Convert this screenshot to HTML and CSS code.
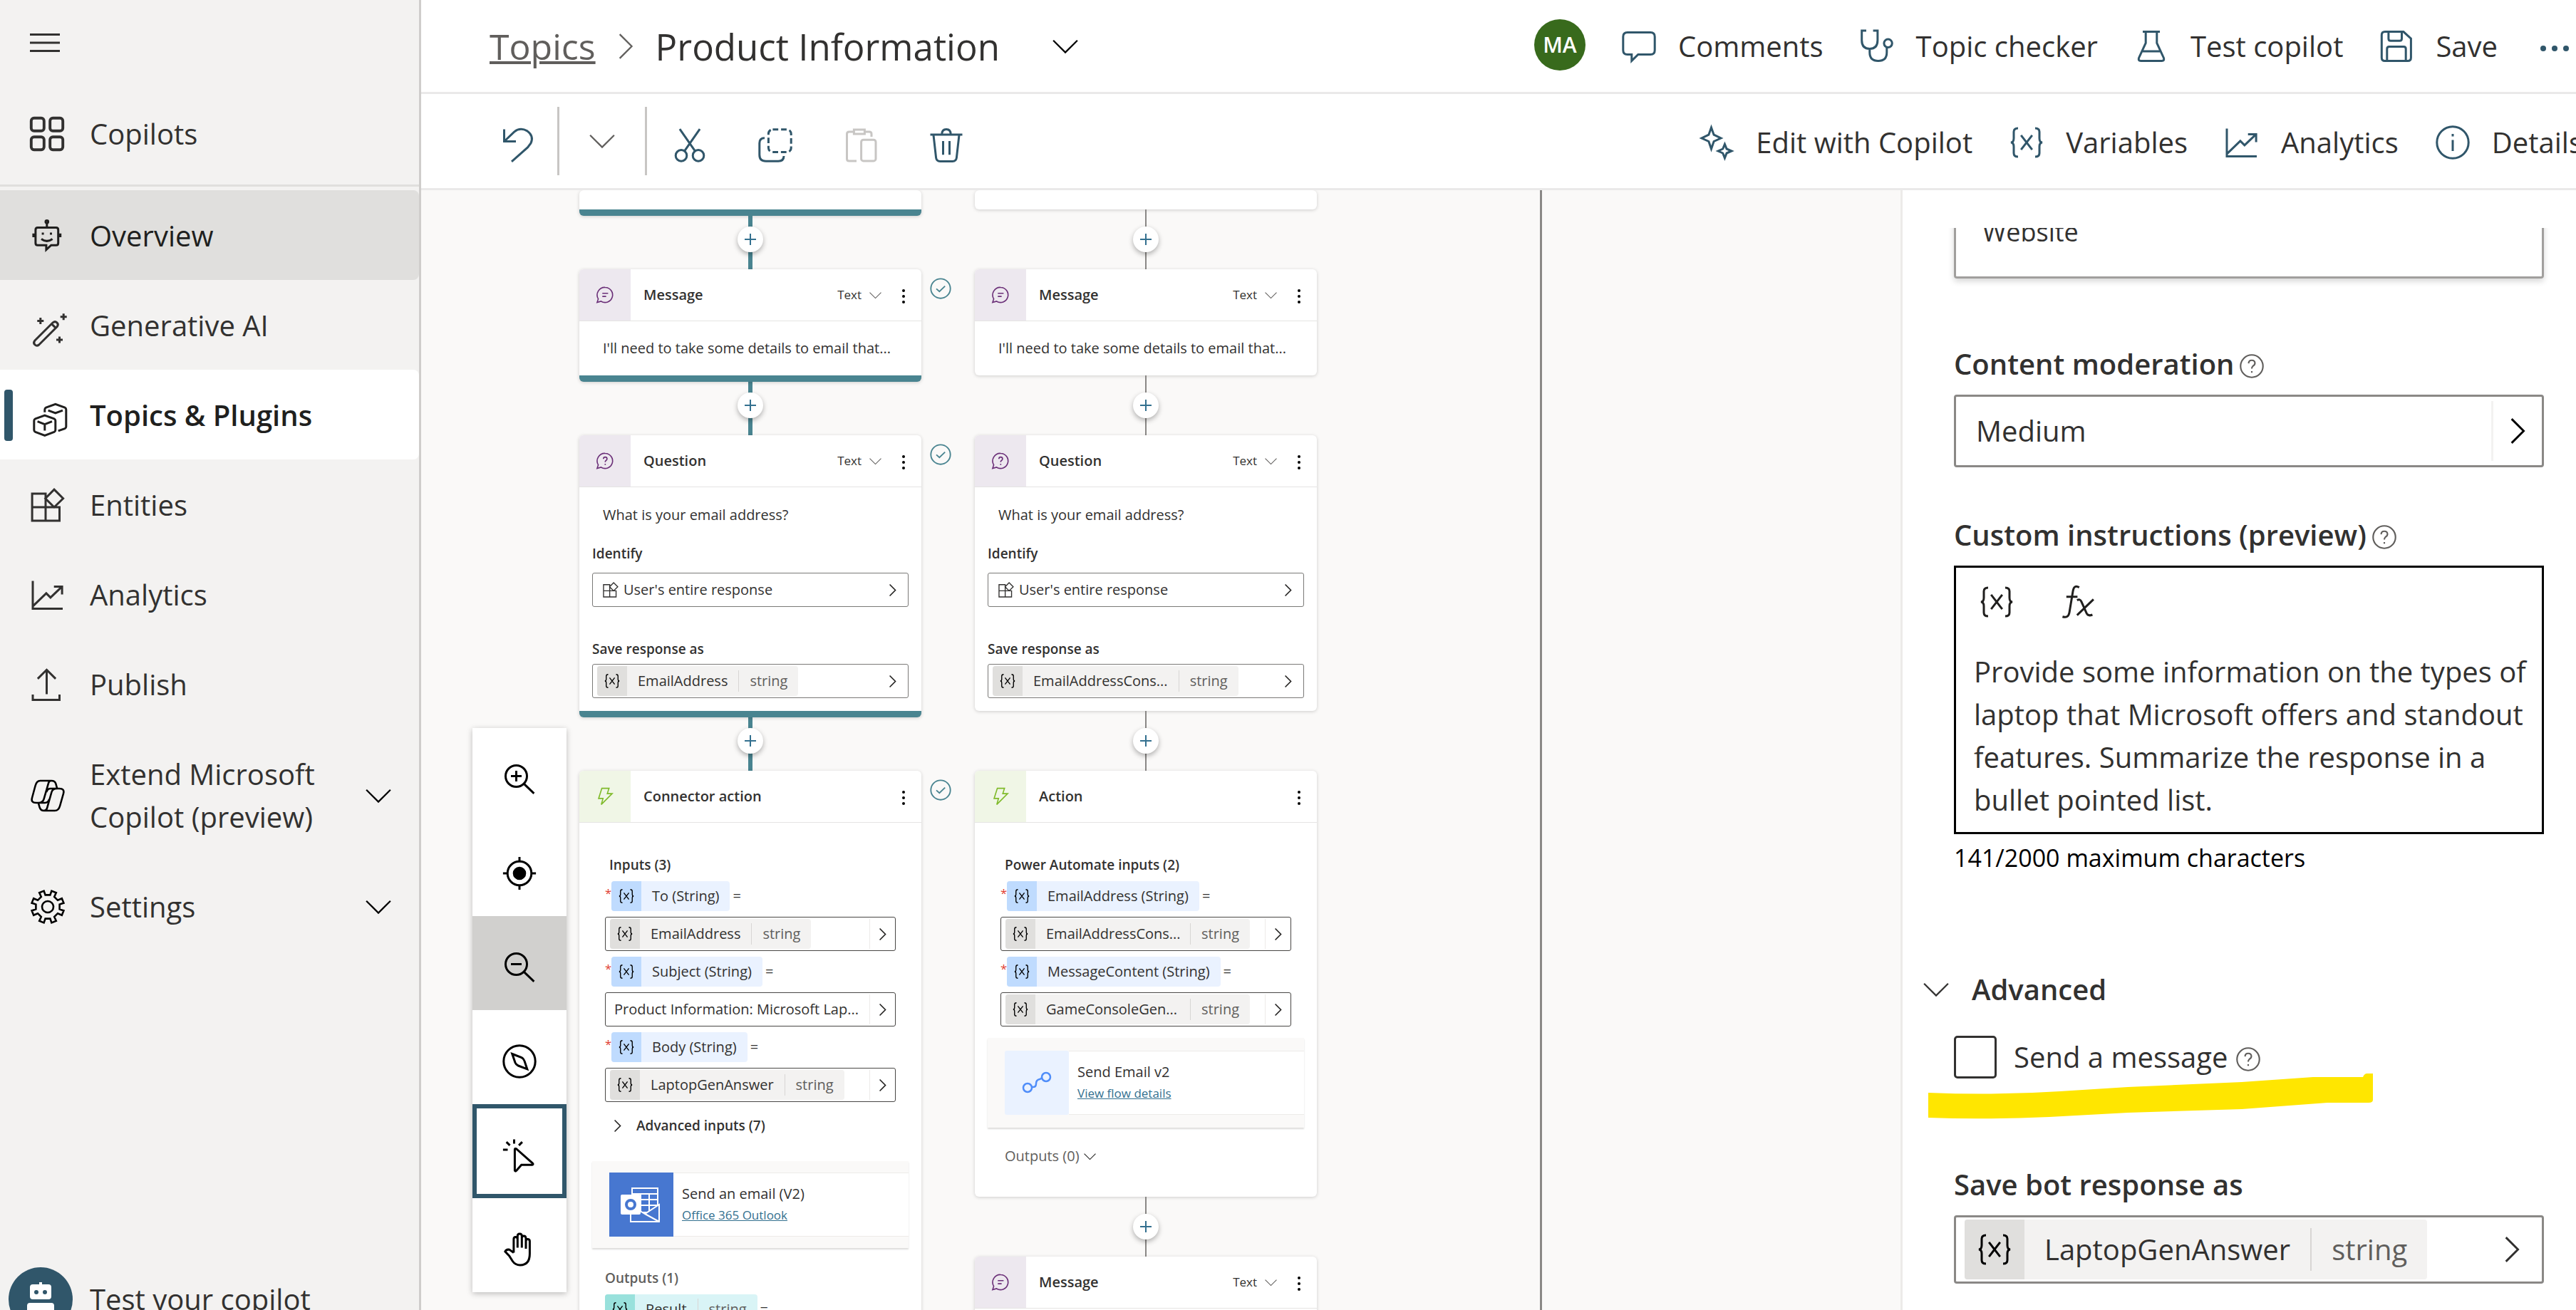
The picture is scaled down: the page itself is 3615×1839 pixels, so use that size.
FILE: index.html
```html
<!DOCTYPE html>
<html lang="en">
<head>
<meta charset="utf-8">
<title>Product Information - Topics</title>
<link rel="stylesheet" href="styles.css">
</head>
<body>
<svg class="defs" aria-hidden="true">
  <symbol id="i-menu" viewBox="0 0 16 16"><path d="M1 4.2h14M1 8h14M1 11.8h14"/></symbol>
  <symbol id="i-apps" viewBox="0 0 16 16"><rect x="0.6" y="0.6" width="6" height="6" rx="1.3"/><rect x="9.4" y="0.6" width="6" height="6" rx="1.3"/><rect x="0.6" y="9.4" width="6" height="6" rx="1.3"/><rect x="9.4" y="9.4" width="6" height="6" rx="1.3"/></symbol>
  <symbol id="i-bot" viewBox="0 0 16 16"><path d="M3.300 4.200h8.600q1 0 1 1v6.200q0 1-1 1H9.600L7.3 14.500v-2.100h-4q-1 0-1-1V5.200q0-1 1-1zM7.600 4.200V1.800M1.300 6.900v1.800M13.900 6.900v1.800M5 9.500q2.600 1.900 5.200 0M5.200 7h1M9 7h1"/><circle cx="7.600" cy="1.400" r=".6"/></symbol>
  <symbol id="i-wand" viewBox="-1 -2 16 16"><path d="M.9 13.100 9.400 4.600q1-.8 1.900 0t.1 1.900L2.900 15q-1 .8-1.900 0t-.1-1.900zM8.800 5.200l2 2M3.600 2.300v3M2.100 3.800h3M14.400.4v3M12.900 1.900h3M12.500 11.200v3M11 12.700h3"/></symbol>
  <symbol id="i-topics" viewBox="-1 -2 16 16"><path d="M1.200 7.600 5.600 6 10 7.600q.6.300.6.900v4.400q0 .6-.6.900L5.600 15.500 1.200 13.800q-.6-.3-.6-.9V8.500q0-.6.6-.9zM2.200 8.900l3.400 1.300L9 8.900M5.600 10.200v3M5.600 4.600V3.300q0-.6.600-.9L10.600.8 15 2.400q.6.300.6.900v8q0 .6-.6.900L11.900 13.300M7.200 3.700l3.400 1.300L14 3.700"/></symbol>
  <symbol id="i-entities" viewBox="0 0 16 16"><path d="M.7 2.700h6.300v12.600H.7zM.7 9h12.800v6.300H7V9zM11 .7l4.200 4.200L11 9 6.900 4.900z"/></symbol>
  <symbol id="i-chart" viewBox="0 0 16 16"><path d="M1 1.500V14.500H15M1 13.400 7.300 7.300l2 2L14.600 4.200M10.900 4.200h3.800v3.600"/></symbol>
  <symbol id="i-publish" viewBox="0 0 16 16"><path d="M7.500 12.500V1M3.300 5.300 7.500 1.100l4.200 4.200M1 12.700v2.500h12.500v-2.500"/></symbol>
  <symbol id="i-copilot" viewBox="0 0 24 24"><path d="M6.700 1.500H14.500q2.600 0 3.200 2.200L18.600 7H20q4 0 3 3.500L20.600 19q-.9 3.500-3.600 3.500H9.300q-2.300 0-3-2.300L5.400 17H4Q0 17 1 13.500L3.300 5Q4.200 1.500 6.700 1.500zM14.500 1.500q-1.600 0-2 1.700L9.300 14.300Q8.500 17 5.400 17M18.600 7H14q-2.200 0-2.900 2.500M9.300 22.500q1.700 0 2.200-1.700L14.700 9.500Q15.400 7 18.600 7M5.400 17H10q2.300 0 3-2.500"/></symbol>
  <symbol id="i-gear" viewBox="0 0 24 24"><circle cx="12" cy="12" r="4"/><path d="M9.300.8 10.300 3.700h3.400L14.700.8l3.200 1.300-1.300 2.900L19 7.400l2.900-1.300 1.300 3.200-2.900 1v3.400l2.900 1-1.300 3.200L19 16.600 16.600 19l1.300 2.900-3.200 1.300-1-2.900h-3.400l-1 2.900-3.200-1.300L7.400 19 5 16.600l-2.900 1.300L.8 14.700l2.900-1v-3.400L.8 9.300 2.100 6.100 5 7.400 7.400 5 6.100 2.100z"/></symbol>
  <symbol id="i-down" viewBox="0 0 16 16"><path d="M.5 4.300 8 11.800l7.500-7.500"/></symbol>
  <symbol id="i-right" viewBox="0 0 16 16"><path d="M4.300.5 11.800 8 4.300 15.500"/></symbol>
  <symbol id="i-undo" viewBox="0 0 16 16"><path d="M1.500.5v5.700H7M1.700 6 6.200 1.700Q9-.6 12.300 1.300q3.200 2.300 1.700 5.700L12.500 9 5 15.600"/></symbol>
  <symbol id="i-cut" viewBox="0 0 16 16"><circle cx="4" cy="12.800" r="2.600"/><circle cx="12" cy="12.800" r="2.600"/><path d="M5.500 10.700 12.700.4M3.300.4 10.500 10.700"/></symbol>
  <symbol id="i-copy" viewBox="0 0 16 16"><rect x="4.800" y=".6" width="10.600" height="10.600" rx="2" stroke-dasharray="2.600 1.300"/><path d="M3 4.600Q.6 4.600.6 7v5.400q0 3 3 3H9.400q2.600 0 2.600-2.400"/></symbol>
  <symbol id="i-paste" viewBox="0 0 16 16"><path d="M6 15.300H2.500Q1.500 15.300 1.500 14.300V2.700Q1.500 1.700 2.500 1.700H4.700M9.800 1.700H12Q13 1.700 13 2.700V4M4.800.7h5v2h-5z"/><rect x="8.200" y="5.400" width="6.800" height="9.900" rx="1"/></symbol>
  <symbol id="i-trash" viewBox="0 0 16 16"><path d="M.5 3h15M5.900 3Q5.900.5 8 .5T10.100 3M2 3.200l1.200 10.600q.2 1.700 1.900 1.700h5.800q1.700 0 1.900-1.700L14 3.200M6.500 6v6.400M9.500 6v6.400"/></symbol>
  <symbol id="i-comment" viewBox="0 0 16 16"><path d="M2.600 1.500H13.400q2 0 2 2v6.300q0 2-2 2H7.600l-3 3v-3H2.600q-2 0-2-2V3.500q0-2 2-2z"/></symbol>
  <symbol id="i-steth" viewBox="0 0 16 16"><path d="M3 .7H.9v4.500q0 4 3.700 4T8.300 5.200V.7H6.200M4.600 9.200v1.600q0 4 4 4t4-4V8.500"/><circle cx="13.200" cy="6.600" r="1.900"/></symbol>
  <symbol id="i-flask" viewBox="0 0 16 16"><path d="M4 1.200h8M5.400 1.200v5.300L2.200 13.400q-.5 1.400.9 1.400h9.800q1.400 0 .9-1.400L10.600 6.500V1.200M4 10.300h8"/></symbol>
  <symbol id="i-save" viewBox="0 0 16 16"><path d="M2.600 1.200h8.700l3.500 3.200v8.900q0 1.500-1.500 1.500H2.600q-1.500 0-1.500-1.500V2.700q0-1.500 1.500-1.500zM4.300 1.200v3.200q0 1 1 1h4.200q1 0 1-1V1.200M3.600 14.800V9.200q0-1 1-1h6.800q1 0 1 1v5.600"/></symbol>
  <symbol id="i-sparkle" viewBox="0 0 16 16"><path d="M5.500 1 6.700 4.400 10 6 6.700 7.500 5.500 11 4.300 7.500 1 6 4.300 4.400zM11.800 8.800l.9 2.200 2.300 1-2.300 1-.9 2.300-.9-2.300-2.200-1 2.200-1z"/></symbol>
  <symbol id="i-var" viewBox="0 0 16 16"><path d="M4 1.300Q2 1.300 2 3v3Q2 8 .6 8 2 8 2 10v3q0 1.700 2 1.700M12 1.300q2 0 2 1.700v3q0 2 1.400 2Q14 8 14 10v3q0 1.700-2 1.700M5.400 4.600l5.200 6.800M10.600 4.600l-5.200 6.800"/></symbol>
  <symbol id="i-info" viewBox="0 0 16 16"><circle cx="8" cy="8" r="7.400"/><path d="M8 6.800V12M8 4v1.200"/></symbol>
  <symbol id="i-help" viewBox="0 0 16 16"><circle cx="8" cy="8" r="7.400"/><path d="M5.900 6.200Q6 4.100 8 4.100t2.100 1.900Q10.100 7.200 8.700 8 8 8.600 8 9.700M8 11.300v1"/></symbol>
  <symbol id="i-fx" viewBox="0 0 16 16"><path d="M8.600 1.200Q6.200-.2 5.700 2.800L4 13q-.5 2.700-3.200 1.900M2.600 5.600h5.200M7.600 7.200q1.400-.8 2 .6l2.500 5.600q.7 1.400 2.700.6M15.300 6.800 7.600 14.200"/></symbol>
  <symbol id="i-msg" viewBox="0 0 16 16"><path d="M8.200 1.500a6.500 6.500 0 1 1-3.600 12L1.200 14.500 2.200 11.500A6.600 6.600 0 0 1 8.200 1.500zM5.700 6.600h5M5.700 9.300H9"/></symbol>
  <symbol id="i-ask" viewBox="0 0 16 16"><path d="M8.200 1.500a6.500 6.500 0 1 1-3.600 12L1.200 14.500 2.200 11.500A6.600 6.600 0 0 1 8.200 1.500zM6.600 6.300Q6.700 4.700 8.200 4.700t1.600 1.500Q9.800 7.200 8.700 7.800 8.200 8.200 8.200 9M8.200 10.500v1"/></symbol>
  <symbol id="i-bolt" viewBox="0 0 16 16"><path d="M5.300 1h6.200L10 5.600h4.200L4.800 15 6.300 9.800H2.500z"/></symbol>
  <symbol id="i-plus" viewBox="0 0 16 16"><path d="M8 0v16M0 8h16"/></symbol>
  <symbol id="i-check" viewBox="0 0 16 16"><circle cx="8" cy="8" r="7.300"/><path d="M4.800 8.200 7.100 10.200l4.200-4"/></symbol>
  <symbol id="i-flow" viewBox="0 0 40 32"><circle cx="7" cy="23" r="6"/><circle cx="33" cy="8" r="6"/><path d="M13 22h2q4 0 4-5t5-6q3-1 3-2.500"/></symbol>
  <symbol id="i-zoomin" viewBox="0 0 16 16"><circle cx="6.500" cy="6.500" r="5"/><path d="M10.200 10.200l4.600 4.400M4 6.500h5M6.500 4v5"/></symbol>
  <symbol id="i-zoomout" viewBox="0 0 16 16"><circle cx="6.500" cy="6.500" r="5"/><path d="M10.200 10.200l4.600 4.400M4 6.500h5"/></symbol>
  <symbol id="i-target" viewBox="0 0 16 16"><circle cx="8" cy="8" r="5.600"/><circle cx="8" cy="8" r="2.600" fill="currentColor"/><path d="M8 .3v2.100M8 13.600v2.100M.3 8h2.100M13.600 8h2.100"/></symbol>
  <symbol id="i-compass" viewBox="0 0 16 16"><circle cx="8" cy="8" r="7.400"/><path d="M4.600 4.500 9 6.200q1 .5 1.300 1.500l1.300 3.900L7.400 10q-1-.4-1.400-1.400z"/></symbol>
  <symbol id="i-pointer" viewBox="0 0 16 16"><path d="M5.800 5.200v9.800q.2.700.8.100l2.300-2.700h5q.8-.2.200-.8L6.500 4.900q-.6-.3-.7.300zM5.500.5v2M1.900 1.700l1.600 1.600M9.300 1.700 7.700 3.300M.3 5.300h2.200"/></symbol>
  <symbol id="i-hand" viewBox="0 0 16 16"><path d="M5.300 9.500V3.200Q5.300 2.200 6.200 2.200t.9 1V1.700Q7.100.7 8.100.7t1 1v1q0-1 .9-1t1 1v1.500q0-1 .8-1 1 0 1 1V10q0 5.300-4.500 5.300-2.300 0-3.500-1.800L3.200 11 1.300 9q.6-1.200 2-.9l2 1.400M7.100 3.200v4M9.100 2.600v4.600M11 4v3.700"/></symbol>
</svg>

<div class="app">
  <nav class="sidebar">
    <button class="menu" aria-label="Menu"><svg class="ic l"><use href="#i-menu"/></svg></button>
    <a class="nav top" href="#"><svg class="ic l bold"><use href="#i-apps"/></svg><span>Copilots</span></a>
    <a class="nav hover" href="#"><svg class="ic l"><use href="#i-bot"/></svg><span>Overview</span></a>
    <a class="nav" href="#"><svg class="ic l"><use href="#i-wand"/></svg><span>Generative AI</span></a>
    <a class="nav current" href="#"><svg class="ic l"><use href="#i-topics"/></svg><span>Topics &amp; Plugins</span></a>
    <a class="nav" href="#"><svg class="ic l"><use href="#i-entities"/></svg><span>Entities</span></a>
    <a class="nav" href="#"><svg class="ic l"><use href="#i-chart"/></svg><span>Analytics</span></a>
    <a class="nav" href="#"><svg class="ic l"><use href="#i-publish"/></svg><span>Publish</span></a>
    <button class="nav"><svg class="ic l fine"><use href="#i-copilot"/></svg><span>Extend Microsoft<br>Copilot (preview)</span><svg class="ic chev"><use href="#i-down"/></svg></button>
    <button class="nav"><svg class="ic l fine"><use href="#i-gear"/></svg><span>Settings</span><svg class="ic chev"><use href="#i-down"/></svg></button>
    <a class="tester" href="#">
      <svg class="bot" viewBox="0 0 90 90"><circle cx="45" cy="45" r="45"/><path class="w" d="M34 24h9v-3h4v3h9q4 0 4 4v13q0 4-4 4H34q-4 0-4-4V28q0-4 4-4zM30 50h30q4 0 4 4v10q0 4-4 4H30q-4 0-4-4V54q0-4 4-4z"/><circle cx="39" cy="35" r="3"/><circle cx="51" cy="35" r="3"/></svg>
      <span>Test your copilot</span>
    </a>
  </nav>

  <div class="main">
    <header class="bar">
      <div class="crumbs">
        <a href="#">Topics</a>
        <svg class="ic m grey"><use href="#i-right"/></svg>
        <h1>Product Information</h1>
        <button aria-label="Topic menu"><svg class="ic m"><use href="#i-down"/></svg></button>
      </div>
      <div class="actions">
        <span class="avatar">MA</span>
        <button class="act"><svg class="ic l"><use href="#i-comment"/></svg>Comments</button>
        <button class="act"><svg class="ic l"><use href="#i-steth"/></svg>Topic checker</button>
        <button class="act"><svg class="ic l"><use href="#i-flask"/></svg>Test copilot</button>
        <button class="act"><svg class="ic l"><use href="#i-save"/></svg>Save</button>
        <button class="act overflow" aria-label="More"><svg class="ic l dots" viewBox="0 0 48 48"><circle cx="7" cy="27" r="4"/><circle cx="23" cy="27" r="4"/><circle cx="39" cy="27" r="4"/></svg></button>
      </div>
    </header>

    <div class="bar tools">
      <div class="edit">
        <button aria-label="Undo"><svg class="ic l"><use href="#i-undo"/></svg></button>
        <button class="split" aria-label="Undo history"><svg class="ic m grey"><use href="#i-down"/></svg></button>
        <button aria-label="Cut"><svg class="ic l"><use href="#i-cut"/></svg></button>
        <button aria-label="Copy"><svg class="ic l"><use href="#i-copy"/></svg></button>
        <button aria-label="Paste" disabled><svg class="ic l"><use href="#i-paste"/></svg></button>
        <button aria-label="Delete"><svg class="ic l"><use href="#i-trash"/></svg></button>
      </div>
      <div class="actions">
        <button class="act"><svg class="ic l"><use href="#i-sparkle"/></svg>Edit with Copilot</button>
        <button class="act"><svg class="ic l"><use href="#i-var"/></svg>Variables</button>
        <button class="act"><svg class="ic l"><use href="#i-chart"/></svg>Analytics</button>
        <button class="act"><svg class="ic l"><use href="#i-info"/></svg>Details</button>
      </div>
    </div>

    <div class="work">
      <main class="canvas">
        <div class="branch done">
          <section class="card stub"></section>
          <div class="link"><button aria-label="Add node"><svg class="ic p"><use href="#i-plus"/></svg></button></div>
          <div class="step">
            <section class="card">
              <header><span class="tile"><svg class="ic s"><use href="#i-msg"/></svg></span><h2>Message</h2><button class="kind">Text<svg class="ic xs"><use href="#i-down"/></svg></button><button class="more" aria-label="More"><i></i><i></i><i></i></button></header>
              <p class="say">I'll need to take some details to email that...</p>
            </section>
            <svg class="ic check"><use href="#i-check"/></svg>
          </div>
          <div class="link"><button aria-label="Add node"><svg class="ic p"><use href="#i-plus"/></svg></button></div>
          <div class="step">
            <section class="card">
              <header><span class="tile"><svg class="ic s"><use href="#i-ask"/></svg></span><h2>Question</h2><button class="kind">Text<svg class="ic xs"><use href="#i-down"/></svg></button><button class="more" aria-label="More"><i></i><i></i><i></i></button></header>
              <div class="ask">
                <p>What is your email address?</p>
                <h3>Identify</h3>
                <button class="field ent"><svg class="ic e"><use href="#i-entities"/></svg>User's entire response<svg class="ic go"><use href="#i-right"/></svg></button>
                <h3 class="save">Save response as</h3>
                <button class="field"><span class="chip"><b><svg class="ic v"><use href="#i-var"/></svg></b><span>EmailAddress</span><em>string</em></span><svg class="ic go"><use href="#i-right"/></svg></button>
              </div>
            </section>
            <svg class="ic check"><use href="#i-check"/></svg>
          </div>
          <div class="link"><button aria-label="Add node"><svg class="ic p"><use href="#i-plus"/></svg></button></div>
          <div class="step">
            <section class="card">
              <header><span class="tile green"><svg class="ic s"><use href="#i-bolt"/></svg></span><h2>Connector action</h2><button class="more" aria-label="More"><i></i><i></i><i></i></button></header>
              <div class="inputs">
                <h3>Inputs (3)</h3>
                <div class="arg"><sup>*</sup><span class="chip blue"><b><svg class="ic v"><use href="#i-var"/></svg></b><span>To (String)</span></span>=</div>
                <button class="field dark"><span class="chip"><b><svg class="ic v"><use href="#i-var"/></svg></b><span>EmailAddress</span><em>string</em></span><span class="end"><svg class="ic go"><use href="#i-right"/></svg></span></button>
                <div class="arg"><sup>*</sup><span class="chip blue"><b><svg class="ic v"><use href="#i-var"/></svg></b><span>Subject (String)</span></span>=</div>
                <button class="field dark"><span class="plain">Product Information: Microsoft Lap...</span><span class="end"><svg class="ic go"><use href="#i-right"/></svg></span></button>
                <div class="arg"><sup>*</sup><span class="chip blue"><b><svg class="ic v"><use href="#i-var"/></svg></b><span>Body (String)</span></span>=</div>
                <button class="field dark"><span class="chip"><b><svg class="ic v"><use href="#i-var"/></svg></b><span>LaptopGenAnswer</span><em>string</em></span><span class="end"><svg class="ic go"><use href="#i-right"/></svg></span></button>
                <button class="adv"><svg class="ic go"><use href="#i-right"/></svg>Advanced inputs (7)</button>
                <div class="flow mail">
                  <span class="logo outlook"><svg viewBox="0 0 90 90"><g fill="none" stroke="#fff" stroke-width="2"><path d="M32 22h36v34H32zM32 30h36M32 38h36M32 46h36M44 30v24M56 30v24"/><path fill="#4777d0" d="M30 46l20 12 20-13v24H30zM50 58l20 11"/></g><rect x="16" y="31" width="28" height="28" rx="2" fill="#fff"/><circle cx="30" cy="45" r="6" fill="none" stroke="#4777d0" stroke-width="4"/></svg></span>
                  <div><span>Send an email (V2)</span><a href="#">Office 365 Outlook</a></div>
                </div>
                <h3 class="out">Outputs (1)</h3>
                <div class="arg res"><span class="chip teal"><b><svg class="ic v"><use href="#i-var"/></svg></b><span>Result</span><em>string</em></span>=</div>
              </div>
            </section>
            <svg class="ic check"><use href="#i-check"/></svg>
          </div>
        </div>

        <div class="branch">
          <section class="card stub"></section>
          <div class="link"><button aria-label="Add node"><svg class="ic p"><use href="#i-plus"/></svg></button></div>
          <section class="card">
            <header><span class="tile"><svg class="ic s"><use href="#i-msg"/></svg></span><h2>Message</h2><button class="kind">Text<svg class="ic xs"><use href="#i-down"/></svg></button><button class="more" aria-label="More"><i></i><i></i><i></i></button></header>
            <p class="say">I'll need to take some details to email that...</p>
          </section>
          <div class="link"><button aria-label="Add node"><svg class="ic p"><use href="#i-plus"/></svg></button></div>
          <section class="card">
            <header><span class="tile"><svg class="ic s"><use href="#i-ask"/></svg></span><h2>Question</h2><button class="kind">Text<svg class="ic xs"><use href="#i-down"/></svg></button><button class="more" aria-label="More"><i></i><i></i><i></i></button></header>
            <div class="ask">
              <p>What is your email address?</p>
              <h3>Identify</h3>
              <button class="field ent"><svg class="ic e"><use href="#i-entities"/></svg>User's entire response<svg class="ic go"><use href="#i-right"/></svg></button>
              <h3 class="save">Save response as</h3>
              <button class="field"><span class="chip"><b><svg class="ic v"><use href="#i-var"/></svg></b><span>EmailAddressCons...</span><em>string</em></span><svg class="ic go"><use href="#i-right"/></svg></button>
            </div>
          </section>
          <div class="link"><button aria-label="Add node"><svg class="ic p"><use href="#i-plus"/></svg></button></div>
          <section class="card">
            <header><span class="tile green"><svg class="ic s"><use href="#i-bolt"/></svg></span><h2>Action</h2><button class="more" aria-label="More"><i></i><i></i><i></i></button></header>
            <div class="inputs">
              <h3>Power Automate inputs (2)</h3>
              <div class="arg"><sup>*</sup><span class="chip blue"><b><svg class="ic v"><use href="#i-var"/></svg></b><span>EmailAddress (String)</span></span>=</div>
              <button class="field dark"><span class="chip fixed"><b><svg class="ic v"><use href="#i-var"/></svg></b><span>EmailAddressCons...</span><em>string</em></span><span class="end"><svg class="ic go"><use href="#i-right"/></svg></span></button>
              <div class="arg"><sup>*</sup><span class="chip blue"><b><svg class="ic v"><use href="#i-var"/></svg></b><span>MessageContent (String)</span></span>=</div>
              <button class="field dark"><span class="chip fixed"><b><svg class="ic v"><use href="#i-var"/></svg></b><span>GameConsoleGen...</span><em>string</em></span><span class="end"><svg class="ic go"><use href="#i-right"/></svg></span></button>
              <div class="flow">
                <span class="logo"><svg class="ic flowic"><use href="#i-flow"/></svg></span>
                <div><span>Send Email v2</span><a href="#">View flow details</a></div>
              </div>
              <button class="outs">Outputs (0)<svg class="ic xs"><use href="#i-down"/></svg></button>
            </div>
          </section>
          <div class="link"><button aria-label="Add node"><svg class="ic p"><use href="#i-plus"/></svg></button></div>
          <section class="card">
            <header><span class="tile"><svg class="ic s"><use href="#i-msg"/></svg></span><h2>Message</h2><button class="kind">Text<svg class="ic xs"><use href="#i-down"/></svg></button><button class="more" aria-label="More"><i></i><i></i><i></i></button></header>
            <p class="say"></p>
          </section>
        </div>
        <div class="wire"></div>

        <div class="zoombar">
          <button aria-label="Zoom in"><svg class="ic l"><use href="#i-zoomin"/></svg></button>
          <button aria-label="Reset view"><svg class="ic l"><use href="#i-target"/></svg></button>
          <button class="pressed" aria-label="Zoom out"><svg class="ic l"><use href="#i-zoomout"/></svg></button>
          <button aria-label="Minimap"><svg class="ic l"><use href="#i-compass"/></svg></button>
          <button class="on" aria-label="Select"><svg class="ic l"><use href="#i-pointer"/></svg></button>
          <button aria-label="Pan"><svg class="ic l"><use href="#i-hand"/></svg></button>
        </div>
      </main>

      <aside class="panel">
        <div class="scroll">
          <input class="site" aria-label="Source" value="Website">
          <h3><label for="mod">Content moderation</label><svg class="ic help"><use href="#i-help"/></svg></h3>
          <button class="pick" id="mod">Medium<span><svg class="ic big"><use href="#i-right"/></svg></span></button>
          <h3 class="second"><label for="ins">Custom instructions (preview)</label><svg class="ic help"><use href="#i-help"/></svg></h3>
          <div class="editor">
            <div><button aria-label="Insert variable"><svg class="ic l"><use href="#i-var"/></svg></button><button aria-label="Insert formula"><svg class="ic l"><use href="#i-fx"/></svg></button></div>
            <textarea id="ins" rows="4">Provide some information on the types of laptop that Microsoft offers and standout features. Summarize the response in a bullet pointed list.</textarea>
          </div>
          <p class="count">141/2000 maximum characters</p>
          <button class="advanced"><svg class="ic m"><use href="#i-down"/></svg>Advanced</button>
          <div class="tick">
            <input type="checkbox" id="send"><label for="send">Send a message</label><svg class="ic help"><use href="#i-help"/></svg>
            <svg class="marker" viewBox="0 0 624 66" aria-hidden="true"><path d="M0 24Q95 28 185 22L280 16 440 9 540 2H610Q612-3 616-3H624V34Q624 38 618 38H560L440 47 280 52 170 58Q80 62 0 59z"/></svg>
          </div>
          <h3 class="third">Save bot response as</h3>
          <button class="pick var"><span class="chip"><b><svg class="ic l"><use href="#i-var"/></svg></b><span>LaptopGenAnswer</span><em>string</em></span><svg class="ic big"><use href="#i-right"/></svg></button>
        </div>
      </aside>
    </div>
  </div>
</div>
</body>
</html>
```

FILE: styles.css
```css
* { box-sizing: border-box; }
body { margin: 0; font-family: "Open Sans", "Noto Sans", sans-serif; font-size: 40px; line-height: 60px; color: #323130; }
h1, h2, h3, p { margin: 0; font-weight: 400; }
button, input, textarea { font: inherit; color: inherit; background: none; border: 0; padding: 0; margin: 0; text-align: left; }
a { color: inherit; text-decoration: none; }
.defs { display: none; }
symbol { overflow: visible; }

.ic { display: block; flex: none; fill: none; stroke: currentColor; stroke-width: 1; overflow: visible; }
.l { width: 48px; height: 48px; }
.m { width: 36px; height: 36px; }
.s { width: 26px; height: 26px; }
.xs { width: 17px; height: 17px; }
.p { width: 16px; height: 16px; }
.e { width: 22px; height: 22px; }
.v { width: 22px; height: 22px; color: #000; }
.bold { stroke-width: 1.300; }
.fine { stroke-width: 1.300; color: #000; }
.grey { color: #605e5c; }
.dots { fill: currentColor; stroke: none; }

.app { display: flex; height: 100vh; overflow: hidden; }

/* Sidebar */
.sidebar { flex: none; width: 591px; display: flex; flex-direction: column; background: #f3f2f1; border-right: 3px solid #cfcdcb; }
.menu { padding: 36px 39px 36px; height: 120px; }
.nav { display: flex; align-items: center; gap: 35px; padding: 34px 39px 32px 43px; border-radius: 0 8px 8px 0; }
.nav span { flex: 1; }
.top { padding: 38px 39px 41px 42px; gap: 36px; border-bottom: 3px solid #e0dfdd; border-radius: 0; margin-bottom: 5px; }
.hover { background: #e0dfdd; color: #201f1e; }
.current { background: #fff; color: #201f1e; font-weight: 600; padding-left: 6px; }
.current::before { content: ""; width: 12px; height: 72px; margin: -6px -10px -6px 0; border-radius: 4px; background: #30566a; }
.chev { width: 36px; height: 36px; color: #000; }
.tester { display: flex; gap: 24px; margin: auto 0 -30px 12px; align-items: center; }
.bot { width: 90px; height: 90px; fill: #30566a; }
.bot .w { fill: #fff; }

/* Top bars */
.main { flex: 1; min-width: 0; display: flex; flex-direction: column; }
.bar { flex: none; display: flex; justify-content: space-between; height: 132px; background: #fff; border-bottom: 3px solid #eae9e9; overflow: hidden; }
.tools { height: 135px; }
.crumbs { display: flex; align-items: center; gap: 24px; padding-left: 96px; }
.crumbs a { font-size: 50px; color: #605e5c; text-decoration: underline; text-decoration-thickness: 4px; }
.crumbs h1 { font-size: 51px; }
.crumbs button { margin-left: 50px; color: #000; }
.actions { display: flex; align-items: center; gap: 51px; padding-right: 5px; }
.tools .actions { gap: 52px; margin-right: -9px; padding: 4px 0 0; }
.act { flex: none; display: flex; align-items: center; gap: 31px; white-space: nowrap; }
.overflow { margin-left: 6px; }
.act .ic, .edit { color: #30566a; }
.avatar { width: 72px; height: 72px; margin-bottom: 4px; border-radius: 36px; background: #386a1c; color: #fff; font-size: 30px; line-height: 72px; font-weight: 600; text-align: center; }
.edit { display: flex; align-items: center; gap: 72px; padding-left: 112px; }
.edit button { padding-top: 12px; }
.edit .split { height: 96px; padding: 0 42px; margin: 0 -36px 0 -41px; border: solid #c8c6c4; border-width: 0 3px; }
.edit button:disabled { color: #c8c6c4; }

/* Canvas */
.work { flex: 1; min-height: 0; display: flex; }
.canvas { flex: 1; position: relative; display: flex; align-items: flex-start; gap: 33px; padding-left: 222px; overflow: hidden; background: #faf9f8; font-size: 20px; line-height: 30px; }
.branch { width: 480px; flex: none; }
.branch.done { width: 522px; }
.wire { align-self: stretch; width: 3px; margin-left: 280px; background: #8a8886; }
.card { width: 480px; flex: none; background: #fff; border-radius: 6px; box-shadow: 0 1px 5px rgba(0, 0, 0, .18); overflow: hidden; }
.done .card { border-bottom: 9px solid #498490; }
.stub { height: 27px; }
.done .stub { height: 36px; }
.link { width: 480px; height: 84px; display: flex; flex-direction: column; justify-content: flex-end; align-items: center; padding-bottom: 24px; background: linear-gradient(#8a8886, #8a8886) center / 2px 100% no-repeat; }
.done .link { height: 75px; background: linear-gradient(#498490, #498490) center / 6px 100% no-repeat; }
.link button { width: 36px; height: 36px; display: grid; place-items: center; border-radius: 18px; background: #fff; color: #33708f; box-shadow: 0 3px 7px rgba(0, 0, 0, .3); }
.link .ic { stroke-width: 2; }
.step { display: flex; gap: 12px; align-items: flex-start; }
.check { width: 30px; height: 30px; margin-top: 12px; color: #498490; }
.card header { display: flex; align-items: center; height: 73px; border-bottom: 1px solid #e5e4e3; }
.tile { width: 72px; height: 72px; margin-right: 18px; display: grid; place-items: center; background: #ede8ef; color: #6b2f78; }
.tile.green { background: #f0f6e6; color: #7fba2a; }
.card h2 { flex: 1; font-size: 20px; font-weight: 600; }
.kind { display: flex; align-items: center; gap: 11px; font-size: 17px; }
.kind .ic { color: #605e5c; }
.more { width: 34px; margin: 4px 8px 0 14px; display: flex; flex-direction: column; align-items: center; gap: 4px; }
.more i { width: 4px; height: 4px; border-radius: 2px; background: #000; }
.say { padding: 23px 33px; white-space: nowrap; }
.card h3 { font-size: 19px; font-weight: 600; }
.ask { padding: 24px 18px 18px; }
.ask p { padding: 0 15px; margin-bottom: 24px; }
.ask .field { margin-top: 12px; }
.ask .save { margin-top: 44px; }
.ask .save + .field { margin-top: 6px; }
.field { display: flex; align-items: center; width: 100%; height: 48px; padding: 0 13px 0 6px; border: 1px solid #7a7977; border-radius: 3px; font-size: 20px; }
.field.ent { padding-left: 14px; gap: 7px; }
.go { width: 17px; height: 17px; margin-left: auto; color: #201f1e; stroke-width: 1.500; }
.chip { flex: none; display: flex; align-items: center; height: 42px; border-radius: 4px; background: #f3f2f1; overflow: hidden; font-size: 20px; white-space: nowrap; }
.chip b { width: 42px; align-self: stretch; display: grid; place-items: center; background: #e0dfdd; }
.chip span { padding: 0 15px; }
.chip em { font-style: normal; color: #605e5c; padding: 0 15px; border-left: 1px solid #d8d6d4; }
.fixed span { width: 217px; }
.blue { background: #eaf2ff; margin-right: 4px; }
.blue b { background: #bfdbfe; }
.teal { background: #d9f4f6; margin-right: 4px; }
.teal b { background: #99e1dc; }
.inputs { display: flex; flex-direction: column; gap: 8px; padding: 44px 36px 42px; }
.inputs h3 { padding-left: 6px; }
.inputs .out { padding: 0; margin-top: 19px; color: #605e5c; }
.arg { display: flex; align-items: center; }
.arg sup { width: 9px; height: 38px; line-height: 30px; color: #e03c31; }
.field.dark { height: 48px; padding: 0 0 0 6px; border-color: #484644; }
.plain { padding-left: 6px; white-space: nowrap; }
.end { margin-left: auto; width: 36px; height: 42px; display: grid; place-items: center; border-left: 1px solid #edebe9; }
.end .go { margin: 0; }
.adv { display: flex; align-items: center; gap: 18px; margin-top: 10px; padding-left: 9px; font-size: 19px; font-weight: 600; }
.adv .go { margin: 0; }
.flow { display: flex; margin: 8px -18px 0; padding: 18px 0 18px 24px; background: #faf9f8; box-shadow: 0 2px 2px #dddcdb; }
.flow.mail { margin-top: 27px; padding: 16px 0 16px 24px; }
.logo { width: 90px; height: 90px; display: grid; place-items: center; background: #eaf2ff; color: #4f8df9; border-radius: 3px; }
.logo.outlook { background: #4777d0; border-radius: 0; }
.flowic { width: 40px; height: 32px; stroke-width: 2.500; }
.flow div { flex: 1; display: flex; flex-direction: column; justify-content: center; padding-left: 12px; background: #fff; border: solid #edebe9; border-width: 1px 0; }
.flow a { font-size: 17px; color: #33708f; text-decoration: underline; }
.outs { display: flex; align-items: center; gap: 6px; margin-top: 17px; padding-left: 6px; color: #605e5c; }
.outs .ic { color: #201f1e; }

.zoombar { position: absolute; left: 72px; bottom: 25px; width: 132px; background: #fff; box-shadow: 0 2px 8px rgba(0, 0, 0, .25); }
.zoombar button { width: 132px; height: 132px; padding-top: 12px; display: grid; place-items: center; color: #000; }
.zoombar .pressed { background: #d1d0ce; }
.zoombar .on { border: 6px solid #30566a; }

/* Properties panel */
.panel { flex: none; width: 948px; padding: 53px 0 0; background: #fff; border-left: 3px solid #edebe9; }
.scroll { height: 100%; padding: 0 45px 0 72px; overflow: hidden; }
.site { display: block; width: 100%; height: 102px; margin-top: -31px; padding: 0 37px 30px; border: 3px solid #a19f9d; border-radius: 4px; box-shadow: 0 4px 8px rgba(0, 0, 0, .16); font-size: 36px; }
.panel h3 { display: flex; align-items: center; gap: 8px; margin: 90px 0 13px; font-size: 40px; font-weight: 600; }
.panel .second { margin-top: 65px; }
.panel .third { margin-top: 119px; }
.help { width: 34px; height: 34px; margin-top: 6px; color: #605e5c; }
.pick { display: flex; align-items: center; width: 100%; height: 102px; padding-left: 28px; border: 3px solid #8a8886; border-radius: 4px; }
.pick > span:not(.chip) { margin-left: auto; width: 71px; height: 84px; display: grid; place-items: center; border-left: 3px solid #f3f2f1; }
.big { width: 36px; height: 36px; color: #000; stroke-width: 1.300; }
.pick.var { height: 96px; padding: 0 24px 0 12px; }
.pick.var > .big { margin-left: auto; color: #323130; }
.panel .chip { height: 84px; font-size: 40px; }
.panel .chip b { width: 84px; color: #000; }
.panel .chip span, .panel .chip em { padding: 0 28px; }
.panel .chip em { border-width: 2px; }
.editor { border: 3px solid #000; padding: 24px 12px 15px 25px; }
.editor div { display: flex; gap: 66px; margin: 0 6px 44px 8px; color: #201f1e; }
.editor textarea { display: block; width: 100%; height: 240px; resize: none; overflow: hidden; outline: 0; }
.count { margin-top: 9px; font-size: 34px; line-height: 48px; color: #000; }
.advanced { display: flex; align-items: center; gap: 32px; margin: 131px 0 35px -43px; font-weight: 600; }
.tick { position: relative; display: flex; align-items: center; }
.tick input { appearance: none; width: 60px; height: 60px; margin-right: 24px; border: 3px solid #323130; border-radius: 5px; }
.tick label { margin-right: 12px; }
.marker { position: absolute; left: -36px; top: 56px; width: 624px; height: 66px; fill: #ffe600; overflow: visible; }
```
